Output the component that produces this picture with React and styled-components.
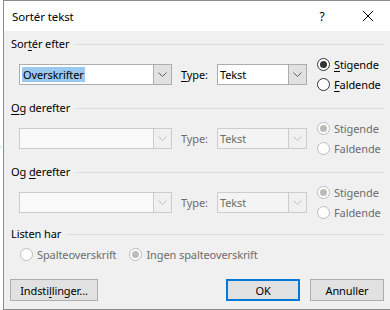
import React from 'react';
import styled, { createGlobalStyle } from 'styled-components';

const GlobalStyle = createGlobalStyle`
  body {
    margin: 0;
    background: #fff;
    font-family: "Noto Sans", "Open Sans", sans-serif;
  }
`;

const Screen = styled.div`
  display: flex;
  width: 390px;
  height: 310px;
  overflow: hidden;
  background: #fff;
`;

const Backdrop = styled.div`
  flex: 0 0 3px;
  overflow: hidden;
  display: flex;
  flex-direction: column;
  font-family: "Liberation Serif", serif;
  font-size: 17px;
  line-height: 1;
`;

const Glyph = styled.span`
  display: block;
  margin-top: ${p => p.$top}px;
  margin-left: -8px;
`;

const Dialog = styled.div`
  flex: 0 0 388px;
  height: 310px;
  box-sizing: border-box;
  border: 1px solid #8c8c8c;
  border-right: none;
  background: #f0f0f0;
  display: flex;
  flex-direction: column;
  color: #000;
  font-size: 11px;
  letter-spacing: -0.1px;
`;

const TitleBar = styled.div`
  height: 30px;
  flex: 0 0 30px;
  background: #fff;
  display: flex;
  align-items: center;
`;

const Title = styled.div`
  flex: 1;
  padding-left: 8px;
  font-size: 11.5px;
`;

const TitleButton = styled.div`
  width: 46px;
  height: 30px;
  display: flex;
  align-items: center;
  justify-content: center;
  font-size: 12px;
`;

const Body = styled.div`
  flex: 1;
  padding: 5px 7px 0 6px;
  display: flex;
  flex-direction: column;
`;

const GroupHeader = styled.div`
  display: flex;
  align-items: center;
  gap: 6px;
  height: 16px;
  line-height: 16px;
  margin-left: 1px;
  margin-top: ${p => p.$top || 0}px;
`;

const Rule = styled.div`
  flex: 1;
  height: 1px;
  background: #dcdcdc;
`;

const Key = styled.span`
  text-decoration: underline;
  text-underline-offset: 2px;
`;

const Row = styled.div`
  display: flex;
  align-items: center;
  height: 40px;
  margin: 2px 0 0 9px;
`;

const Combo = styled.div`
  display: flex;
  width: ${p => p.$w}px;
  height: 21px;
  box-sizing: border-box;
  border: 1px solid ${p => (p.$off ? '#cccccc' : '#adadad')};
  background: ${p => p.$bg};
`;

const Field = styled.div`
  flex: 1;
  display: flex;
  align-items: center;
  padding-left: 2px;
  color: ${p => (p.$off ? '#6d6d6d' : '#000')};
`;

const Selected = styled.span`
  background: #99c9ef;
  line-height: 15px;
  padding: 0 1px;
`;

const DropButton = styled.div`
  width: 17px;
  display: flex;
  align-items: center;
  justify-content: center;
  border-left: 1px solid ${p => (p.$off ? '#cccccc' : '#adadad')};
  background: ${p => (p.$off ? '#f0f0f0' : '#e1e1e1')};
`;

const TypeLabel = styled.span`
  width: 36px;
  margin-left: 9px;
  color: ${p => (p.$off ? '#6d6d6d' : '#000')};
`;

const RadioGroup = styled.div`
  display: flex;
  flex-direction: column;
  margin-left: 10px;
`;

const RadioRow = styled.label`
  display: flex;
  align-items: center;
  gap: 4px;
  height: 20px;
  margin-left: ${p => p.$gap || 0}px;
  color: ${p => (p.$off ? '#6d6d6d' : '#000')};
`;

const RadioCircle = styled.span`
  width: 13px;
  height: 13px;
  box-sizing: border-box;
  border-radius: 50%;
  border: 1px solid ${p => (p.$off ? '#bcbcbc' : '#333')};
  background: #fff;
  display: flex;
  align-items: center;
  justify-content: center;

  &::after {
    content: '';
    display: ${p => (p.$checked ? 'block' : 'none')};
    width: 7px;
    height: 7px;
    border-radius: 50%;
    background: ${p => (p.$off ? '#bcbcbc' : '#333')};
  }
`;

const OptionsRow = styled.div`
  display: flex;
  align-items: center;
  height: 20px;
  margin: 2px 0 0 10px;
`;

const ButtonRow = styled.div`
  display: flex;
  gap: 10px;
  margin-top: 15px;
`;

const Spacer = styled.div`
  flex: 1;
`;

const PushButton = styled.button`
  width: ${p => p.$w}px;
  height: 22px;
  box-sizing: border-box;
  border: ${p => (p.$primary ? '2px solid #0078d7' : '1px solid #adadad')};
  background: #e1e1e1;
  font-family: inherit;
  font-size: 11px;
  letter-spacing: inherit;
  color: #000;
  padding: 0;
`;

const Chevron = ({ off }) => (
  <svg width="9" height="5" viewBox="0 0 9 5">
    <path d="M0.5 0.5 L4.5 4.5 L8.5 0.5" fill="none" stroke={off ? '#bfbfbf' : '#606060'} strokeWidth="1" />
  </svg>
);

const Close = () => (
  <svg width="10" height="10" viewBox="0 0 10 10">
    <path d="M0 0 L10 10 M10 0 L0 10" stroke="#000" strokeWidth="1" />
  </svg>
);

function Radio({ checked, off, gap, children }) {
  return (
    <RadioRow $off={off} $gap={gap}>
      <RadioCircle $checked={checked} $off={off} />
      <span>{children}</span>
    </RadioRow>
  );
}

function SortRow({ off, field }) {
  return (
    <Row>
      <Combo $w={153} $off={off} $bg={off ? '#f9f9f9' : '#fff'}>
        <Field>{field}</Field>
        <DropButton $off={off}><Chevron off={off} /></DropButton>
      </Combo>
      <TypeLabel $off={off}>{off ? 'Type:' : <><Key>T</Key>ype:</>}</TypeLabel>
      <Combo $w={90} $off={off} $bg={off ? '#f4f4f4' : '#fff'}>
        <Field $off={off}>Tekst</Field>
        <DropButton $off={off}><Chevron off={off} /></DropButton>
      </Combo>
      <RadioGroup>
        <Radio checked off={off}>{off ? 'Stigende' : <><Key>S</Key>tigende</>}</Radio>
        <Radio off={off}>{off ? 'Faldende' : <><Key>F</Key>aldende</>}</Radio>
      </RadioGroup>
    </Row>
  );
}

export default function App() {
  return (
    <Screen>
      <GlobalStyle />
      <Backdrop>
        <Glyph $top={137}>o</Glyph>
        <Glyph $top={46}>c</Glyph>
      </Backdrop>
      <Dialog>
        <TitleBar>
          <Title>Sortér tekst</Title>
          <TitleButton>?</TitleButton>
          <TitleButton><Close /></TitleButton>
        </TitleBar>
        <Body>
          <GroupHeader>
            <span>Sor<Key>t</Key>ér efter</span>
            <Rule />
          </GroupHeader>
          <SortRow field={<Selected>Overskrifter</Selected>} />

          <GroupHeader $top={6}>
            <span><Key>O</Key>g derefter</span>
            <Rule />
          </GroupHeader>
          <SortRow off />

          <GroupHeader $top={6}>
            <span>Og <Key>d</Key>erefter</span>
            <Rule />
          </GroupHeader>
          <SortRow off />

          <GroupHeader $top={4}>
            <span>Listen har</span>
            <Rule />
          </GroupHeader>
          <OptionsRow>
            <Radio off>Spalteoverskrift</Radio>
            <Radio off checked gap={13}>Ingen spalteoverskrift</Radio>
          </OptionsRow>

          <ButtonRow>
            <PushButton $w={88}>Indsti<Key>l</Key>linger...</PushButton>
            <Spacer />
            <PushButton $w={74} $primary>OK</PushButton>
            <PushButton $w={74}>Annuller</PushButton>
          </ButtonRow>
        </Body>
      </Dialog>
    </Screen>
  );
}
